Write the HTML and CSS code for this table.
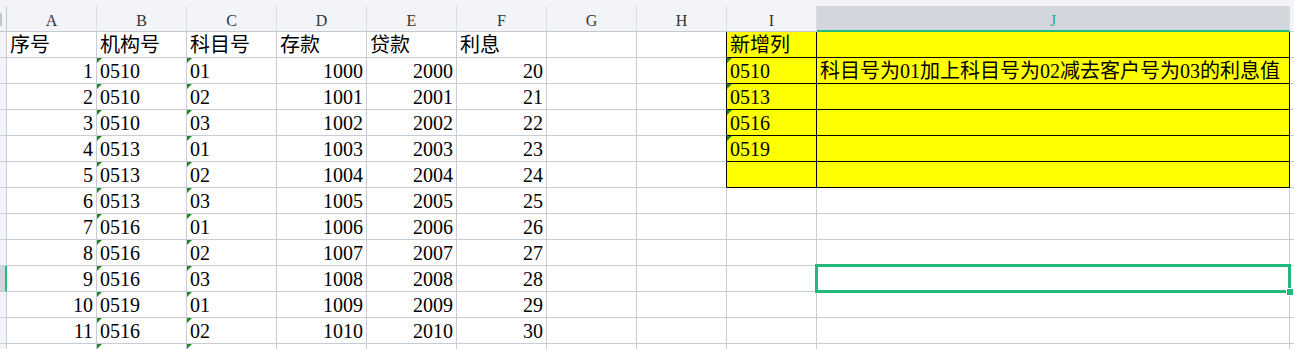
FILE: index.html
```html
<!DOCTYPE html>
<html lang="zh-CN">
<head>
<meta charset="utf-8">
<title>Sheet</title>
<link rel="stylesheet" href="styles.css">
</head>
<body>
<div class="sheet">
  <div class="strip"></div>

  <div class="ch corner"><span class="corner-mark"></span></div>
  <div class="ch">A</div><div class="ch">B</div><div class="ch">C</div><div class="ch">D</div><div class="ch">E</div><div class="ch">F</div><div class="ch">G</div><div class="ch">H</div><div class="ch">I</div><div class="ch active">J</div><div class="ch last"></div>

  <div class="rh"></div><div class="c">序号</div><div class="c">机构号</div><div class="c">科目号</div><div class="c">存款</div><div class="c">贷款</div><div class="c">利息</div><div class="c"></div><div class="c bl"></div><div class="c y">新增列</div><div class="c y"></div><div class="c"></div>

  <div class="rh"></div><div class="c n">1</div><div class="c t">0510</div><div class="c t">01</div><div class="c n">1000</div><div class="c n">2000</div><div class="c n">20</div><div class="c"></div><div class="c bl"></div><div class="c y t">0510</div><div class="c y">科目号为01加上科目号为02减去客户号为03的利息值</div><div class="c"></div>

  <div class="rh"></div><div class="c n">2</div><div class="c t">0510</div><div class="c t">02</div><div class="c n">1001</div><div class="c n">2001</div><div class="c n">21</div><div class="c"></div><div class="c bl"></div><div class="c y t">0513</div><div class="c y"></div><div class="c"></div>

  <div class="rh"></div><div class="c n">3</div><div class="c t">0510</div><div class="c t">03</div><div class="c n">1002</div><div class="c n">2002</div><div class="c n">22</div><div class="c"></div><div class="c bl"></div><div class="c y t">0516</div><div class="c y"></div><div class="c"></div>

  <div class="rh"></div><div class="c n">4</div><div class="c t">0513</div><div class="c t">01</div><div class="c n">1003</div><div class="c n">2003</div><div class="c n">23</div><div class="c"></div><div class="c bl"></div><div class="c y t">0519</div><div class="c y"></div><div class="c"></div>

  <div class="rh"></div><div class="c n">5</div><div class="c t">0513</div><div class="c t">02</div><div class="c n">1004</div><div class="c n">2004</div><div class="c n">24</div><div class="c"></div><div class="c bl"></div><div class="c y"></div><div class="c y"></div><div class="c"></div>

  <div class="rh"></div><div class="c n">6</div><div class="c t">0513</div><div class="c t">03</div><div class="c n">1005</div><div class="c n">2005</div><div class="c n">25</div><div class="c"></div><div class="c"></div><div class="c"></div><div class="c"></div><div class="c"></div>

  <div class="rh"></div><div class="c n">7</div><div class="c t">0516</div><div class="c t">01</div><div class="c n">1006</div><div class="c n">2006</div><div class="c n">26</div><div class="c"></div><div class="c"></div><div class="c"></div><div class="c"></div><div class="c"></div>

  <div class="rh"></div><div class="c n">8</div><div class="c t">0516</div><div class="c t">02</div><div class="c n">1007</div><div class="c n">2007</div><div class="c n">27</div><div class="c"></div><div class="c"></div><div class="c"></div><div class="c"></div><div class="c"></div>

  <div class="rh sel-row"></div><div class="c n">9</div><div class="c t">0516</div><div class="c t">03</div><div class="c n">1008</div><div class="c n">2008</div><div class="c n">28</div><div class="c"></div><div class="c"></div><div class="c"></div><div class="c"></div><div class="c"></div>

  <div class="rh"></div><div class="c n">10</div><div class="c t">0519</div><div class="c t">01</div><div class="c n">1009</div><div class="c n">2009</div><div class="c n">29</div><div class="c"></div><div class="c"></div><div class="c"></div><div class="c"></div><div class="c"></div>

  <div class="rh"></div><div class="c n">11</div><div class="c t">0516</div><div class="c t">02</div><div class="c n">1010</div><div class="c n">2010</div><div class="c n">30</div><div class="c"></div><div class="c"></div><div class="c"></div><div class="c"></div><div class="c"></div>

  <div class="rh"></div><div class="c"></div><div class="c t"></div><div class="c t"></div><div class="c"></div><div class="c"></div><div class="c"></div><div class="c"></div><div class="c"></div><div class="c"></div><div class="c"></div><div class="c"></div>

  <div class="selection"></div>
  <div class="handle"></div>
</div>
</body>
</html>
```
FILE: styles.css
```css
html, body {
  margin: 0;
  padding: 0;
  background: #ffffff;
  overflow: hidden;
}

.sheet {
  position: relative;
  display: grid;
  grid-template-columns: 7px repeat(9, 90px) 473px 1fr;
  grid-template-rows: 6px 26px;
  grid-auto-rows: 26px;
  width: 1294px;
  height: 349px;
  overflow: hidden;
  font-family: "Liberation Serif", "Noto Sans CJK SC", serif;
}

.strip {
  grid-column: 1 / -1;
  background: #f3f4f7;
}

.ch {
  box-sizing: border-box;
  background: #f3f4f7;
  border-right: 1px solid #d9dce3;
  border-bottom: 1px solid #c4c8d2;
  font-size: 16px;
  line-height: 25px;
  padding-top: 2px;
  text-align: center;
  color: #333333;
}

.ch.corner {
  position: relative;
  border-right: 1px solid #c4c8d2;
}

.corner-mark {
  display: block;
  width: 2px;
  height: 13px;
  margin-top: 5px;
  background: #c3c6cc;
}

.ch.active {
  background: #d3d6dc;
  border-bottom: 2px solid #22b97c;
  color: #22b07a;
}

.ch.last {
  border-right: none;
}

.rh {
  box-sizing: border-box;
  background: #f3f4f7;
  border-right: 1px solid #c4c8d2;
  border-bottom: 1px solid #c8ccd6;
}

.rh.sel-row {
  background: #d3d6dc;
  border-right: 2px solid #22b97c;
}

.c {
  position: relative;
  box-sizing: border-box;
  border-right: 1px solid #c8ccd6;
  border-bottom: 1px solid #c8ccd6;
  font-size: 20px;
  line-height: 25px;
  padding: 1px 3px 0 3px;
  white-space: nowrap;
  color: #000000;
}

.c.n {
  text-align: right;
}

.c.t::before {
  content: "";
  position: absolute;
  left: 0;
  top: 0;
  width: 5px;
  height: 5px;
  background: #1e8a1e;
  clip-path: polygon(0 0, 100% 0, 0 100%);
}

.c.bl {
  border-right-color: #000000;
}

.c.y {
  background: #ffff00;
  border-right-color: #000000;
  border-bottom-color: #000000;
}

.selection {
  position: absolute;
  left: 815px;
  top: 264px;
  width: 476px;
  height: 29px;
  box-sizing: border-box;
  border: 3px solid #22b97c;
}

.handle {
  position: absolute;
  left: 1286px;
  top: 288px;
  width: 8px;
  height: 8px;
  box-sizing: border-box;
  background: #22b97c;
  border: 1px solid #ffffff;
}
```
